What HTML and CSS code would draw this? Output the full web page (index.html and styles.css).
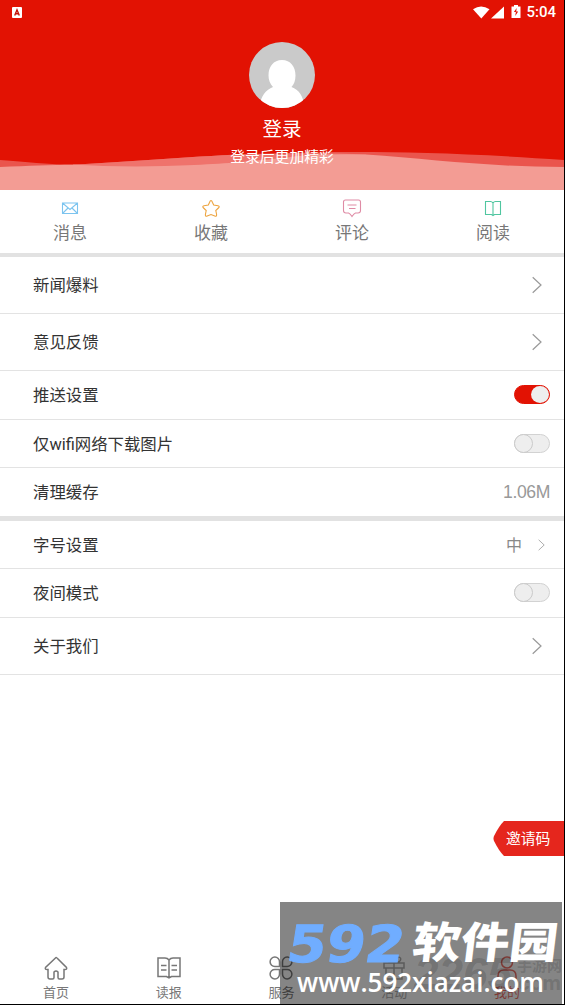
FILE: index.html
```html
<!DOCTYPE html>
<html lang="zh-CN">
<head>
<meta charset="utf-8">
<title>我的</title>
<link rel="stylesheet" href="styles.css">
</head>
<body>
<div class="screen">
  <header class="hero">
    <svg class="waves" viewBox="0 0 564 40" preserveAspectRatio="none">
      <path class="wave-a" d="M0 10C30 12 50 15 73 14.500C150 11 210 4 282 3.500C340 1 440 1 564 10V40H0Z"/>
      <path class="wave-b" d="M73 14.500C150 11 210 4 282 3.500Q330 2.500 366 4.500V40H73Z"/>
      <path class="wave-c" d="M0 17C30 16 50 15 73 14.800C100 16 130 17 165 16C230 14 260 10 285 8Q310 3.500 366 4.500C430 9 490 17 564 17V40H0Z"/>
    </svg>
    <div class="status">
      <svg width="10" height="11" viewBox="0 0 10 11"><rect width="10" height="11" rx="1" fill="#fff"/><path d="M2.700 8.500L5 2.800l2.300 5.700M3.500 6.700h3" fill="none" stroke="#c31208" stroke-width="1.400"/></svg>
      <div class="status-right">
        <svg width="49" height="15" viewBox="0 0 49 15" fill="#fff"><path d="M1 4.300Q9 -1.500 17.500 4.300L9.300 13.500Z"/><path d="M32 1.500V13.500H19Z"/><path d="M39.500 1.500h2.500V0h4v1.500h2.500v11.500h-9Z"/><path d="M44.700 3L41.900 7h2L43.200 11l3-4.500h-2Z" fill="#e21203"/></svg>
        <span>5:04</span>
      </div>
    </div>
    <svg class="avatar" viewBox="0 0 66 66"><defs><clipPath id="face"><circle cx="33" cy="33" r="33"/></clipPath></defs><g clip-path="url(#face)"><rect width="66" height="66" fill="#cacaca"/><path d="M33 18c8.500 0 13.500 6.500 13.500 15.500 0 5-1.500 9-4 11.500C50 48 54 53 56 66H10C12 53 17 48 24 45c-3-3-4.500-7-4.500-11.500C19.500 24.500 24.500 18 33 18Z" fill="#fff"/></g></svg>
    <div class="login">登录</div>
    <div class="hint">登录后更加精彩</div>
  </header>
  <nav class="tabs">
    <div class="tab"><svg viewBox="0 0 20 20" stroke="#7cc4ef"><path d="M2.500 5h15v10.500h-15ZM2.500 5L10 11.500 17.500 5M2.500 15.500l5.500-5.500M17.500 15.500L12 10"/></svg><span>消息</span></div>
    <div class="tab"><svg viewBox="0 0 20 20" stroke="#eda43f"><path d="M10 2.500Q10.800 2.500 11.500 4.500L12.700 7 17 7.800Q19.200 8.300 17.400 10L14.800 12.500 15.600 16.500Q15.800 18.800 13.800 18L10 16.500 6.200 18Q4.200 18.800 4.400 16.500L5.200 12.500 2.600 10Q.8 8.300 3 7.800L7.300 7 8.500 4.500Q9.200 2.500 10 2.500Z"/></svg><span>收藏</span></div>
    <div class="tab"><svg viewBox="0 0 20 20" stroke="#df8ba5"><path d="M3.500 2h13Q18.500 2 18.500 4v8.500Q18.500 15 16 15h-2.500Q12 15.500 10 18.500 8 15.500 6.500 15H4Q1.500 15 1.500 12.500V4Q1.500 2 3.500 2ZM5.500 7h9M7 10.500h6.500"/></svg><span>评论</span></div>
    <div class="tab"><svg viewBox="0 0 20 20" stroke="#50c6a0"><path d="M10 5Q9 3.500 7.500 3.500H2.500v13h6L10 17.500l1.500-1h6v-13h-5Q11 3.500 10 5ZM10 5v12"/></svg><span>阅读</span></div>
  </nav>
  <main>
    <div class="row r1"><span class="label">新闻爆料</span><svg class="chev" viewBox="0 0 10 18"><path d="M.7 1.200L9 9 .7 16.800"/></svg></div>
    <div class="row r2"><span class="label">意见反馈</span><svg class="chev" viewBox="0 0 10 18"><path d="M.7 1.200L9 9 .7 16.800"/></svg></div>
    <div class="row r3"><span class="label">推送设置</span><i class="switch on"></i></div>
    <div class="row r4"><span class="label">仅wifi网络下载图片</span><i class="switch"></i></div>
    <div class="row r5"><span class="label">清理缓存</span><span class="size">1.06M</span></div>
    <div class="row r6"><span class="label">字号设置</span><span class="choice"><span class="label">中</span><svg class="chev small" viewBox="0 0 10 18"><path d="M.7 1.200L9 9 .7 16.800"/></svg></span></div>
    <div class="row r7"><span class="label">夜间模式</span><i class="switch"></i></div>
    <div class="row r8"><span class="label">关于我们</span><svg class="chev" viewBox="0 0 10 18"><path d="M.7 1.200L9 9 .7 16.800"/></svg></div>
  </main>
  <div class="invite"><svg viewBox="0 0 71 35"><path d="M11 0H71V35H11Q6 30 1 20Q0 17.500 1 15Q6 5 11 0Z" fill="#e5261d"/></svg><span>邀请码</span></div>
  <footer class="bottom">
    <div class="item"><svg viewBox="0 0 24 24"><path d="M12 1.500L1.500 11.500Q.5 14 4 13.500V21Q4 23 6 23h2.500Q10 23 10 21.500V16Q12 14 14 16v5.500Q14 23 15.500 23H18Q20 23 20 21V13.500Q23.500 14 22.500 11.500L13.500 2.500Q12 1 12 1.500Z"/></svg><span>首页</span></div>
    <div class="item"><svg viewBox="0 0 24 24"><path d="M12 4Q10.500 2 8 2H1v18.500h8.500L12 22l2.500-1.500H23V2h-7Q13.500 2 12 4ZM12 4v17M4 9.500h5.500M4 14h5.500M14.500 9.500H20M14.500 14H20"/></svg><span>读报</span></div>
    <div class="item"><svg viewBox="0 0 24 24"><path d="M10.500 10.500H6A4.700 4.700 0 1 1 10.500 6ZM13.500 10.500V6A4.700 4.700 0 1 1 18 10.500ZM10.500 13.500V18A4.700 4.700 0 1 1 6 13.500ZM13.500 13.500H18A4.700 4.700 0 1 1 13.500 18Z"/></svg><span>服务</span></div>
    <div class="item faded"><svg viewBox="0 0 24 24"><path d="M2 7h20v5H2ZM4 12v11h16V12M12 7v16M12 7C2 6 5-1 9 2Q11 3 12 7ZM12 7C22 6 19-1 15 2Q13 3 12 7Z"/></svg><span>活动</span></div>
    <div class="item active faded"><svg viewBox="0 0 24 24"><circle cx="12" cy="6.500" r="5.500"/><path d="M3 23v-3q0-6 6-6h6q6 0 6 6v3"/></svg><span>我的</span></div>
  </footer>
  <svg class="watermark" viewBox="0 0 284 102">
    <rect width="282" height="102" fill="#000" fill-opacity=".48"/>
    <g fill="#000" fill-opacity=".15" font-family="Noto Sans CJK SC, sans-serif"><text x="134" y="87" font-family="Liberation Sans, sans-serif" font-size="44" font-weight="bold" font-style="italic" textLength="98" lengthAdjust="spacingAndGlyphs">2265</text><text x="237" y="69" font-size="15" font-weight="bold">手游网</text><text x="238" y="88" font-family="Inter, sans-serif" font-size="20" font-weight="bold" textLength="43" lengthAdjust="spacingAndGlyphs">com</text></g>
    <text transform="translate(5 59.500) skewX(-9)" fill="#70adff" stroke="#70adff" stroke-width="1" font-family="DejaVu Sans, sans-serif" font-size="51" font-weight="bold" textLength="117" lengthAdjust="spacingAndGlyphs">592</text>
    <text transform="translate(131 55.500) skewX(-7)" fill="#fff" font-family="Noto Sans CJK SC, sans-serif" font-size="43" font-weight="900" textLength="145" lengthAdjust="spacingAndGlyphs">软件园</text>
    <text x="17" y="90" fill="#fff" font-family="Open Sans, sans-serif" font-size="27" font-weight="600" textLength="247" lengthAdjust="spacingAndGlyphs">www.592xiazai.com</text>
  </svg>
</div>
</body>
</html>
```
FILE: styles.css
```css
*, *::before { box-sizing: border-box; }
body { margin: 0; background: #000; font-family: Roboto, "Noto Sans CJK SC", sans-serif; }
.screen { position: relative; width: 564px; height: 1004px; background: #fff; display: flex; flex-direction: column; overflow: hidden; }
.hero { position: relative; height: 190px; flex: none; background: #e21203; color: #fff; display: flex; flex-direction: column; align-items: center; }
.waves { position: absolute; left: 0; bottom: 0; width: 564px; height: 40px; }
.wave-a { fill: #ea554d; }
.wave-b { fill: #ef736c; }
.wave-c { fill: #f39c94; }
.status { width: 100%; height: 24px; display: flex; justify-content: space-between; align-items: center; padding: 0 8px 0 12px; }
.status-right { display: flex; align-items: center; gap: 5px; font-size: 15px; font-weight: 500; }
.status svg { display: block; }
.avatar { width: 66px; height: 66px; margin-top: 18px; flex: none; }
.login { position: relative; font-size: 19.5px; line-height: 28px; margin-top: 8px; }
.hint { position: relative; font-size: 14.8px; line-height: 22px; margin-top: 2px; }
.tabs { height: 66.5px; flex: none; display: grid; grid-template-columns: repeat(4, 1fr); border-bottom: 4px solid #e2e2e2; }
.tab { display: flex; flex-direction: column; align-items: center; padding: 8px 1px 0 0; color: #777; font-size: 17px; line-height: 24px; }
.tab svg { width: 20px; height: 20px; fill: none; stroke-width: 1.1; margin-bottom: 3px; }
.row { display: flex; align-items: center; justify-content: space-between; padding: 0 14px 0 33px; border-bottom: 1px solid #e3e3e3; color: #333; font-size: 16.4px; line-height: 24px; }
.label { padding-top: 2px; }
.r1 { height: 57.5px; }
.r2 { height: 57px; }
.r3 { height: 49px; }
.r4 { height: 48px; }
.r5 { height: 53px; border-bottom: 5px solid #e2e2e2; }
.r6 { height: 48px; }
.r7 { height: 49px; }
.r8 { height: 57px; }
.chev { width: 10px; height: 18px; margin-right: 8px; fill: none; stroke: #999; stroke-width: 1.2; }
.chev.small { width: 7px; height: 12px; margin-right: 5px; }
.switch { width: 36px; height: 19px; margin-bottom: 1px; border: 1px solid #d2d2d2; border-radius: 10px; background: #eee; display: flex; }
.switch::before { content: ""; width: 19px; height: 19px; margin: -1px; border: 1px solid #cacaca; border-radius: 50%; background: #eee; }
.switch.on { background: #e21203; border-color: #e21203; justify-content: flex-end; }
.switch.on::before { width: 18px; height: 17px; margin: 0; border: 0; }
.size { color: #999; font: 17.6px "Liberation Sans", sans-serif; letter-spacing: -.4px; padding-top: 1px; }
.choice { display: flex; align-items: center; gap: 16px; color: #888; font-size: 16px; }
.invite { position: absolute; right: 0; top: 821px; width: 71px; height: 35px; color: #fff; }
.invite svg { position: absolute; inset: 0; width: 71px; height: 35px; }
.invite span { position: relative; display: block; padding: 1px 0 0 13px; font-size: 14.8px; line-height: 35px; }
.bottom { margin-top: auto; height: 49px; display: grid; grid-template-columns: repeat(5, 1fr); color: #777; font-size: 13px; line-height: 18px; }
.item { display: flex; flex-direction: column; align-items: center; padding-right: 1px; }
.item svg { width: 24px; height: 24px; margin: 1px 0 4px; fill: none; stroke: #777; stroke-width: 1.5; flex: none; }
.item.active { color: #e21203; }
.item.active svg { stroke: #e21203; }
.item.faded { opacity: .6; }
.watermark { position: absolute; left: 280px; top: 902px; width: 284px; height: 102px; }
```
